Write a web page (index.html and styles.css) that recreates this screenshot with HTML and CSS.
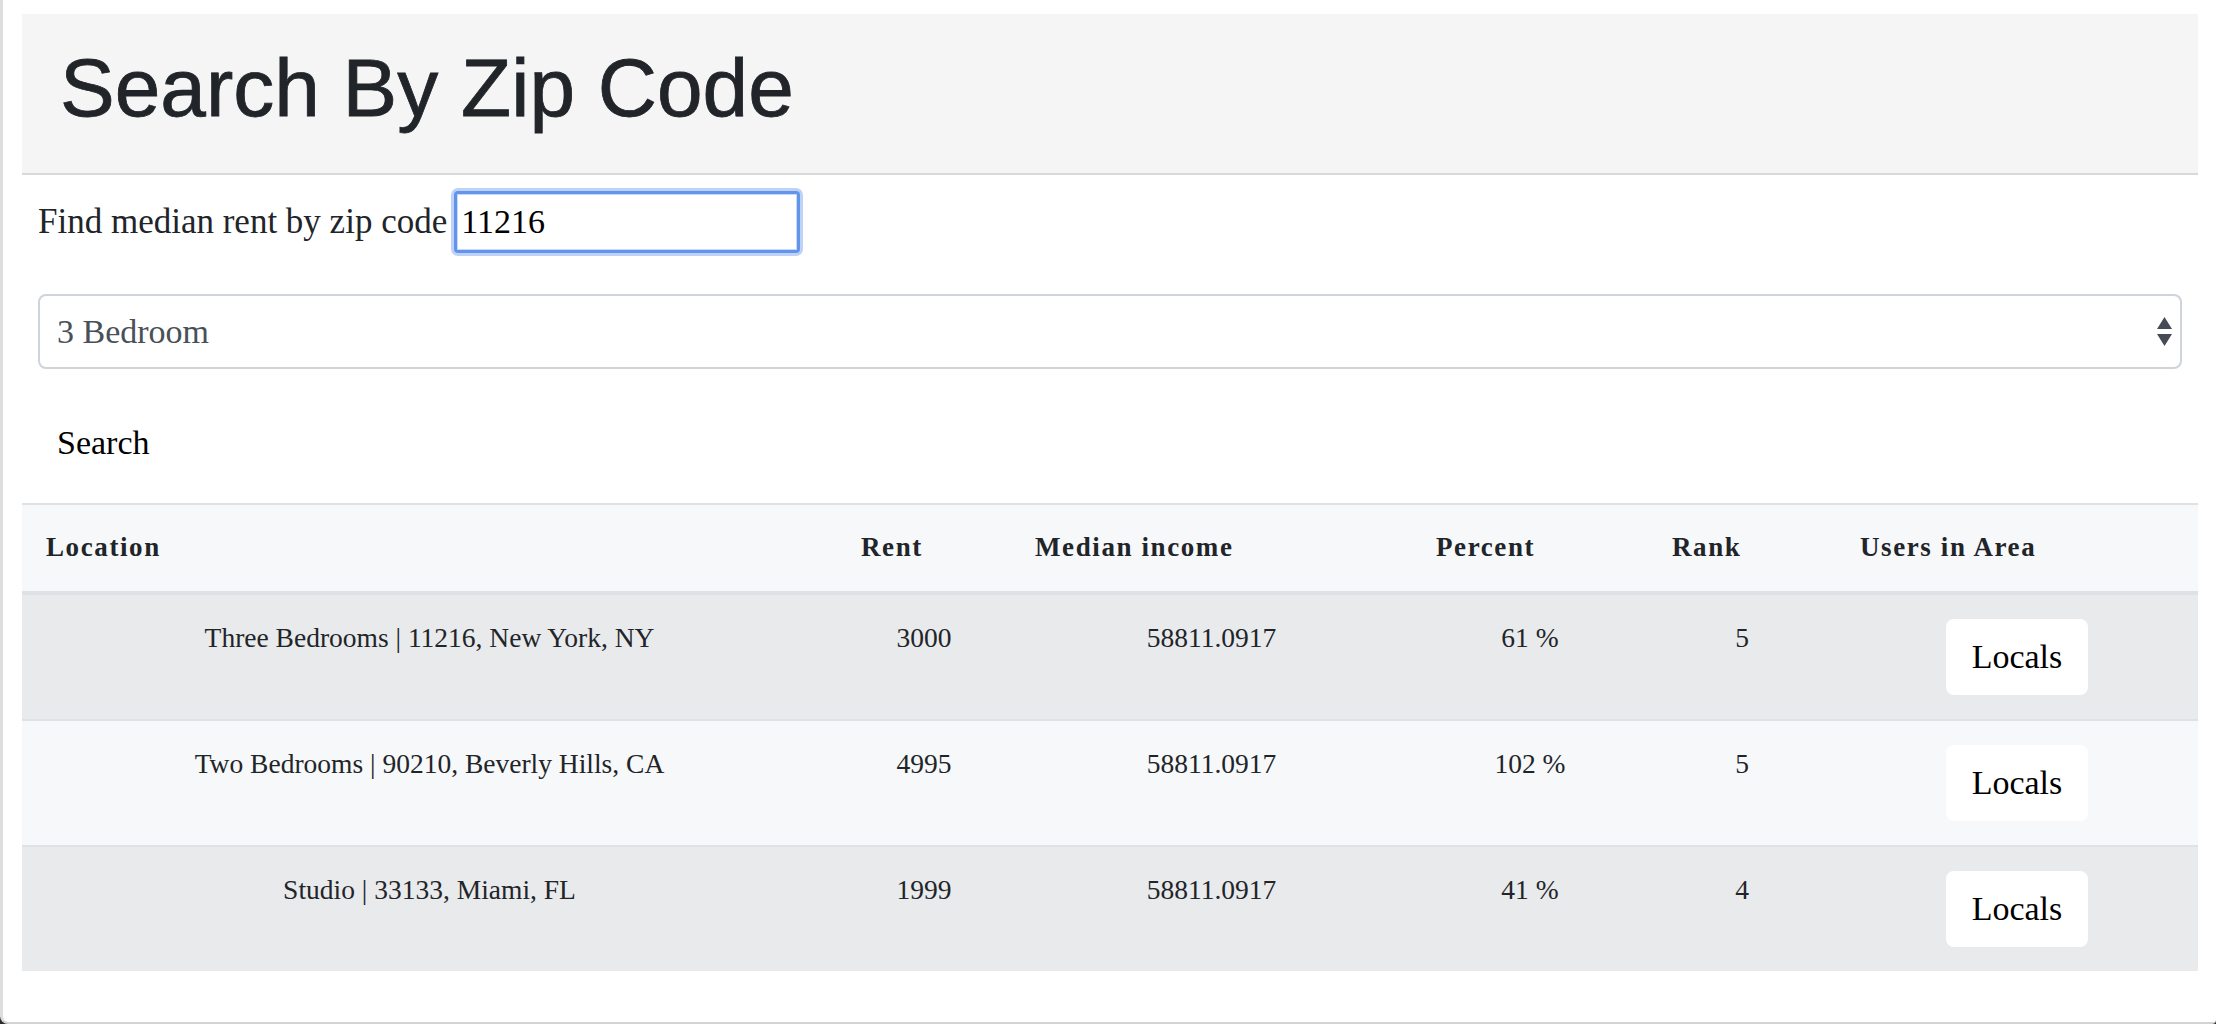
FILE: index.html
```html
<!DOCTYPE html>
<html lang="en">
<head>
<meta charset="utf-8">
<title>Search By Zip Code</title>
<link rel="stylesheet" href="styles.css">
</head>
<body>
<div class="window">
  <header class="jumbo">
    <h1 class="jumbo-title">Search By Zip Code</h1>
  </header>
  <form class="search-form">
    <div class="zip-row">
      <label class="zip-label" for="zip">Find median rent by zip code</label>
      <input id="zip" class="zip-input" type="text" value="11216">
    </div>
    <div class="select-wrap">
      <select class="rooms">
        <option>3 Bedroom</option>
      </select>
      <svg class="select-arrows" width="15" height="29" viewBox="0 0 15 29" aria-hidden="true">
        <polygon points="7.5,0 15,12 0,12" fill="#474c54"/>
        <polygon points="0,17 15,17 7.5,29" fill="#474c54"/>
      </svg>
    </div>
    <button type="button" class="search-btn">Search</button>
  </form>
  <table class="results">
    <colgroup>
      <col class="c-loc"><col class="c-rent"><col class="c-inc"><col class="c-pct"><col class="c-rank"><col class="c-users">
    </colgroup>
    <thead>
      <tr>
        <th>Location</th><th>Rent</th><th>Median income</th><th>Percent</th><th>Rank</th><th>Users in Area</th>
      </tr>
    </thead>
    <tbody>
      <tr class="odd">
        <td>Three Bedrooms | 11216, New York, NY</td><td>3000</td><td>58811.0917</td><td>61 %</td><td>5</td>
        <td><button type="button" class="locals-btn">Locals</button></td>
      </tr>
      <tr class="even">
        <td>Two Bedrooms | 90210, Beverly Hills, CA</td><td>4995</td><td>58811.0917</td><td>102 %</td><td>5</td>
        <td><button type="button" class="locals-btn">Locals</button></td>
      </tr>
      <tr class="odd">
        <td>Studio | 33133, Miami, FL</td><td>1999</td><td>58811.0917</td><td>41 %</td><td>4</td>
        <td><button type="button" class="locals-btn">Locals</button></td>
      </tr>
    </tbody>
  </table>
</div>
</body>
</html>
```
FILE: styles.css
```css
html, body {
  margin: 0;
  padding: 0;
}

body {
  background: #2b2b2b;
  font-family: "Liberation Serif", "Times New Roman", serif;
  color: #212529;
}

.window {
  box-sizing: border-box;
  width: 2216px;
  height: 1024px;
  background: #ffffff;
  border-left: 3px solid #dedede;
  border-bottom: 2px solid #d4d4d4;
  border-bottom-left-radius: 8px;
  border-bottom-right-radius: 4px;
  padding: 14px 18px 0 19px;
}

.jumbo {
  background: #f5f5f5;
  border-bottom: 2px solid #d9d9d9;
  padding: 25px 38px 36px;
}

.jumbo-title {
  margin: 0;
  font-family: "Liberation Sans", Arial, sans-serif;
  font-weight: 400;
  font-size: 82px;
  line-height: 1.2;
  color: #212529;
  -webkit-text-stroke: 0.8px #212529;
}

.search-form {
  padding: 0 16px;
}

.zip-row {
  display: flex;
  align-items: center;
  margin-top: 16px;
  height: 62px;
}

.zip-label {
  font-size: 35px;
  line-height: 1.5;
  color: #212529;
}

.zip-input {
  box-sizing: border-box;
  width: 346px;
  height: 62px;
  margin-left: 7px;
  padding: 0 4px;
  border: 3px solid #6394ec;
  border-radius: 4px;
  box-shadow: 0 0 0 3px rgba(110, 155, 238, 0.45), inset 0 0 0 1px #c8daf9;
  outline: none;
  font-family: "Liberation Serif", "Times New Roman", serif;
  font-size: 34px;
  color: #000000;
  background: #ffffff;
}

.select-wrap {
  position: relative;
  margin-top: 41px;
}

.rooms {
  box-sizing: border-box;
  display: block;
  width: 100%;
  height: 75px;
  padding: 0 17px;
  border: 2px solid #ced4da;
  border-radius: 8px;
  background: #ffffff;
  font-family: "Liberation Serif", "Times New Roman", serif;
  font-size: 34px;
  color: #495057;
  -webkit-appearance: none;
  appearance: none;
  outline: none;
}

.select-arrows {
  position: absolute;
  right: 10px;
  top: 23px;
  pointer-events: none;
}

.search-btn {
  display: block;
  box-sizing: border-box;
  height: 75px;
  margin-top: 36px;
  padding: 0 19px;
  border: none;
  background: transparent;
  font-family: "Liberation Serif", "Times New Roman", serif;
  font-size: 34px;
  line-height: 1.5;
  color: #000000;
}

.results {
  width: 100%;
  margin-top: 23px;
  border-collapse: collapse;
  table-layout: fixed;
  font-size: 27.5px;
  line-height: 37.8px;
  color: #212529;
}

.c-loc { width: 815px; }
.c-rent { width: 174px; }
.c-inc { width: 401px; }
.c-pct { width: 236px; }
.c-rank { width: 188px; }
.c-users { width: 362px; }

.results th {
  padding: 24px;
  text-align: left;
  font-size: 27px;
  font-weight: 700;
  letter-spacing: 1.6px;
  background: #f7f8fa;
  border-top: 2px solid #dee2e6;
  border-bottom: 4px solid #dee2e6;
  vertical-align: bottom;
}

.results td {
  padding: 24px;
  text-align: center;
  vertical-align: top;
  border-top: 2px solid #dee2e6;
}

.results tr.odd td {
  background: #e9eaec;
}

.results tr.even td {
  background: #f7f8fa;
}

.locals-btn {
  display: flex;
  align-items: center;
  justify-content: center;
  box-sizing: border-box;
  width: 142px;
  height: 76px;
  margin: 0 auto;
  padding: 0;
  border: none;
  border-radius: 8px;
  background: #ffffff;
  font-family: "Liberation Serif", "Times New Roman", serif;
  font-size: 34px;
  color: #000000;
}
```
